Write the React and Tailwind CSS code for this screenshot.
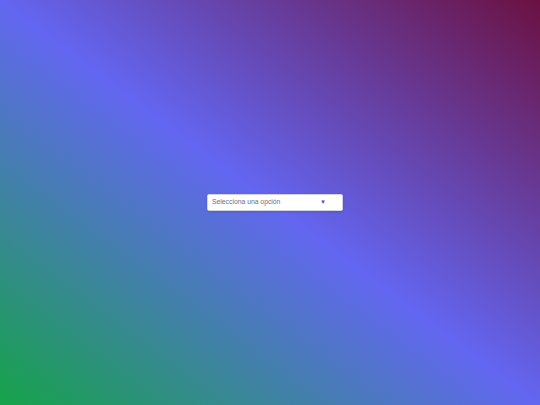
import React from 'react';

const App = () => {
  return (
    <div className="w-[540px] h-[405px] bg-[linear-gradient(to_top_right,#16a34a,#6366f1,#6b1142)] flex items-center justify-center font-['Liberation_Sans',Arial,sans-serif]">
      {/* Select */}
      <div className="mt-[-1px] ml-[10px] w-[136px] h-[17px] bg-white border border-[#d1d5db] rounded-[2px] shadow-sm flex items-center pl-[4px] pr-[16px] cursor-pointer">
        <span className="flex-1 text-[6.8px] text-[#6b7280] leading-none">Selecciona una opción</span>
        <span className="text-[6px] text-[#4f46e5] leading-none">▼</span>
      </div>
    </div>
  );
};

export default App;
